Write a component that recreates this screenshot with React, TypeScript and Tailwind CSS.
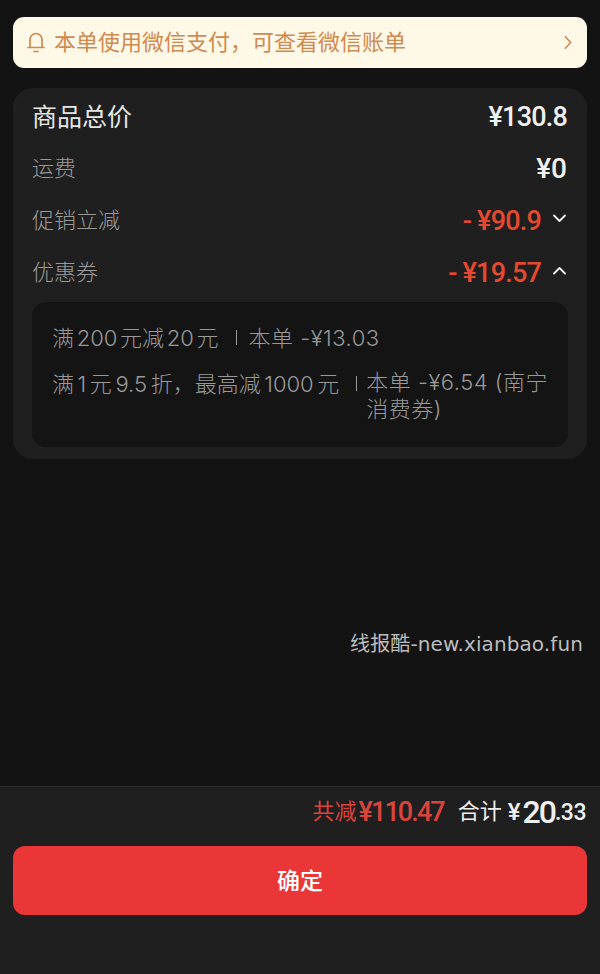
import React from "react";

function Chevron({ up, className }: { up?: boolean; className?: string }) {
  return (
    <svg viewBox="0 0 14 9" className={className} fill="none" stroke="currentColor" strokeWidth="1.8" strokeLinecap="round" strokeLinejoin="round">
      <path d={up ? "M1.5 7.5 7 2l5.5 5.5" : "M1.5 1.5 7 7l5.5-5.5"} />
    </svg>
  );
}

export default function App() {
  return (
    <div className="relative flex h-[974px] w-[600px] flex-col overflow-hidden bg-[#131313] font-['Roboto','Noto_Sans_CJK_SC',sans-serif]">
      <main className="flex flex-1 flex-col px-[13px] pt-[17px]">
        <div className="flex h-[51px] items-center rounded-[11px] bg-[#fef8e6] pl-[13px] pr-[15px] text-[#d08a4f]">
          <svg viewBox="0 0 20 24" className="mb-[2px] h-[24px] w-[20px]" fill="none" stroke="currentColor" strokeWidth="1.7" strokeLinecap="round" strokeLinejoin="round">
            <path d="M2 17.5h16M4 17.5V9.5a6 6 0 0 1 12 0v8M8 21.5h4" />
          </svg>
          <span className="ml-[8px] flex-1 text-[22px] leading-none">本单使用微信支付，可查看微信账单</span>
          <svg viewBox="0 0 9 16" className="h-[15px] w-[8px]" fill="none" stroke="currentColor" strokeWidth="1.8" strokeLinecap="round" strokeLinejoin="round">
            <path d="M1.5 1.5 7.5 8l-6 6.5" />
          </svg>
        </div>

        <section className="mt-[20px] flex h-[371px] flex-col rounded-[20px] bg-[#1f1f1f] px-[19px] pt-[13px]">
          <div className="flex h-[32px] items-center justify-between">
            <span className="text-[25px] leading-none text-[#e6e6e6]">商品总价</span>
            <span className="pr-px text-[27px] font-medium leading-none tracking-[-0.8px] text-[#f0f0f0]">¥130.8</span>
          </div>
          <div className="mt-[20px] flex h-[32px] items-center justify-between">
            <span className="text-[22px] font-light leading-none text-[#9a9a9a]">运费</span>
            <span className="pr-px text-[28px] font-medium leading-none text-[#f0f0f0]">¥0</span>
          </div>
          <div className="mt-[20px] flex h-[32px] items-center justify-between">
            <span className="text-[22px] font-light leading-none text-[#9a9a9a]">促销立减</span>
            <span className="flex items-center pr-px">
              <span className="text-[27px] font-medium leading-none tracking-[-0.8px] text-[#e5492f]">- ¥90.9</span>
              <Chevron className="ml-[11px] mb-[5px] h-[9px] w-[15px] text-[#f0f0f0]" />
            </span>
          </div>
          <div className="mt-[20px] flex h-[32px] items-center justify-between">
            <span className="text-[22px] font-light leading-none text-[#9a9a9a]">优惠券</span>
            <span className="flex items-center pr-px">
              <span className="text-[27px] font-medium leading-none tracking-[-0.8px] text-[#e5492f]">- ¥19.57</span>
              <Chevron up className="ml-[11px] mb-[5px] h-[9px] w-[15px] text-[#f0f0f0]" />
            </span>
          </div>

          <div className="mt-[13px] flex h-[145px] flex-col rounded-[14px] bg-[#141414] px-[20px] pt-[20px] font-['Inter','Noto_Sans_CJK_SC',sans-serif] text-[22px] font-light leading-[32px] text-[#999999]">
            <div className="flex">
              <span className="[word-spacing:-3.5px]">满 200 元减 20 元</span>
              <span className="ml-[17px] mr-[12px] mt-[8px] h-[15px] w-px bg-[#999999]" />
              <span className="tracking-[0.5px]">本单 -¥13.03</span>
            </div>
            <div className="mt-[14px] flex">
              <span className="shrink-0 [word-spacing:-2.6px]">满 1 元 9.5 折，最高减 1000 元</span>
              <span className="ml-[17px] mr-[9px] mt-[8px] h-[15px] w-px shrink-0 bg-[#999999]" />
              <span className="mt-[1px] leading-[27px] tracking-[0.5px]">本单 -¥6.54 (南宁消费券)</span>
            </div>
          </div>
        </section>
      </main>

      <footer className="h-[188px] border-t border-[#2a2a2a] bg-[#1f1f1f] px-[13px]">
        <div className="flex h-[50px] items-center justify-end pr-px">
          <span className="text-[22px] leading-none text-[#d9443c]">共减</span>
          <span className="ml-[2px] text-[27px] font-medium leading-none tracking-[-1.9px] text-[#d9443c]">¥110.47</span>
          <span className="ml-[14px] text-[22px] leading-none text-[#efefef]">合计</span>
          <span className="ml-[6px] text-[24px] font-medium leading-none text-[#efefef]">¥</span>
          <span className="ml-[2px] text-[32px] font-medium leading-none tracking-[-2px] text-[#efefef]">20</span>
          <span className="text-[23px] font-medium leading-none tracking-[-0.5px] text-[#efefef]">.33</span>
        </div>
        <button className="mt-[9px] flex h-[69px] w-full items-center justify-center rounded-[12px] bg-[#ea3636] pt-[3px] text-[23px] font-medium text-white">
          确定
        </button>
      </footer>

      <div className="absolute right-[17px] top-[630px] font-['DejaVu_Sans','Noto_Sans_CJK_SC',sans-serif] text-[20px] leading-[28px] tracking-[0.1px] text-[#bdbdbd]">
        线报酷-new.xianbao.fun
      </div>
    </div>
  );
}
